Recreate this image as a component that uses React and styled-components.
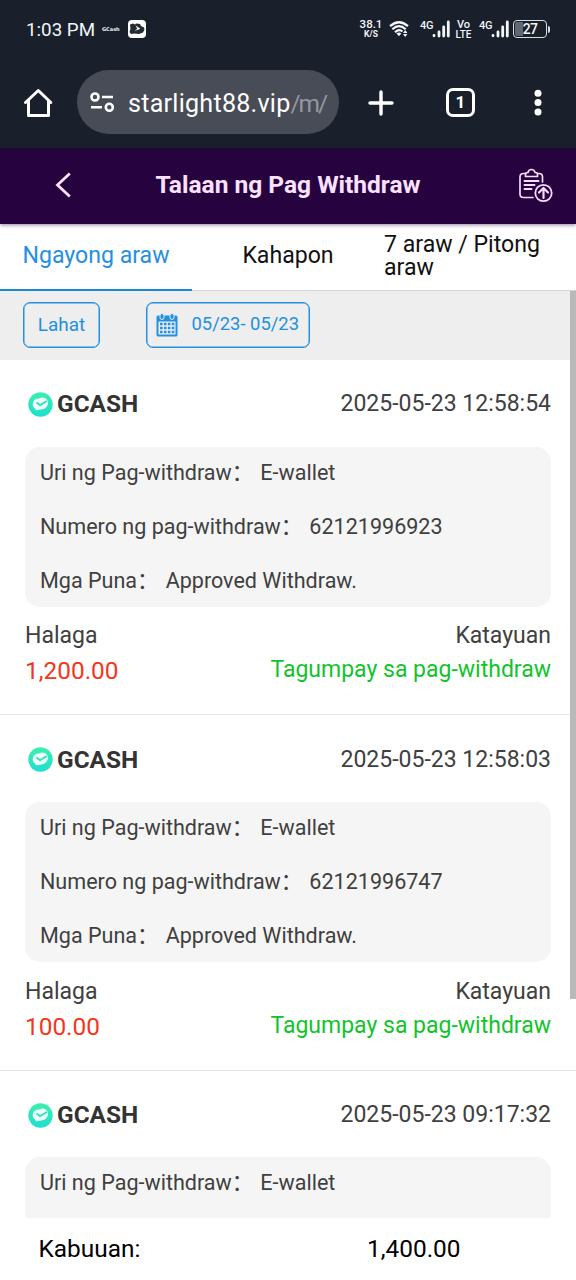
import React from "react";
import styled, { createGlobalStyle } from "styled-components";

const GlobalStyle = createGlobalStyle`
  * { box-sizing: border-box; }
  html, body { margin: 0; padding: 0; background: #fff; }
  body { font-family: Roboto, "Noto Sans CJK SC", sans-serif; overflow: hidden; }
`;

const Screen = styled.div`
  width: 576px;
  height: 1280px;
  display: flex;
  flex-direction: column;
  overflow: hidden;
  background: #fff;
  color: #404040;
`;

const StatusBar = styled.div`
  height: 58px;
  flex: none;
  display: flex;
  align-items: center;
  padding: 0 26px 0 26px;
  background: #19202b;
  color: #f1f5f9;
`;

const Clock = styled.span`
  font-size: 18.8px;
  line-height: 24px;
  padding-top: 2px;
  width: 76px;
  white-space: nowrap;
`;

const CarrierMark = styled.span`
  font-family: "DejaVu Sans", sans-serif;
  font-size: 5px;
  font-weight: 700;
  width: 26px;
  line-height: 8px;
  white-space: nowrap;
`;

const StatusIcons = styled.div`
  display: flex;
  align-items: center;
  margin-left: auto;
`;

const StackedLabel = styled.div`
  width: ${(p) => p.$width}px;
  margin-right: ${(p) => p.$gap}px;
  display: flex;
  flex-direction: column;
  align-items: center;
  font-weight: 500;
  font-size: ${(p) => p.$size}px;
  line-height: ${(p) => p.$line}px;
  white-space: nowrap;

  small {
    font-size: ${(p) => p.$sub}px;
    font-weight: ${(p) => p.$subWeight || 700};
    line-height: 9px;
  }
`;

const WifiSlot = styled.div`
  display: flex;
  margin-right: 11px;
`;

const SignalGroup = styled.div`
  display: flex;
  height: 19px;
  width: 30px;
  justify-content: space-between;
  margin-right: ${(p) => p.$gap}px;
  font-size: 11px;
  font-weight: 500;
  letter-spacing: -0.2px;
  line-height: 12px;
  svg { margin-left: -2px; flex: none; }
`;

const BrowserBar = styled.div`
  height: 91px;
  flex: none;
  display: flex;
  align-items: flex-start;
  padding: 12px 0 0 23px;
  background: #19202b;
  color: #fff;
  border-bottom: 1px solid #1b0c33;
`;

const BarIcon = styled.div`
  height: 64px;
  width: ${(p) => p.$width}px;
  flex: none;
  display: flex;
  align-items: center;
  padding-top: 1px;
  justify-content: ${(p) => p.$align || "center"};
`;

const AddressPill = styled.div`
  width: 262px;
  height: 64px;
  flex: none;
  display: flex;
  align-items: center;
  border-radius: 32px;
  background: #484c56;
  padding-left: 12px;
  svg { margin-right: 14px; flex: none; }
`;

const Url = styled.span`
  font-size: 25.1px;
  letter-spacing: 0.25px;
  line-height: 32px;
  padding-top: 3px;
  white-space: nowrap;
  span { color: #94979f; font-size: 24.5px; letter-spacing: -2.1px; }
`;

const TabCounter = styled.div`
  width: 29px;
  height: 29px;
  border: 3px solid #fff;
  border-radius: 7px;
  font-size: 17px;
  font-weight: 700;
  line-height: 23px;
  text-align: center;
`;

const TitleBar = styled.header`
  height: 75px;
  flex: none;
  display: grid;
  grid-template-columns: 76px 1fr 76px;
  align-items: center;
  background: #26033f;
  color: #fce2ff;
  box-shadow: 0 1px 4px rgba(38, 3, 63, 0.5);
  z-index: 1;
`;

const BackButton = styled.div`
  display: flex;
  justify-content: flex-end;
  padding-right: 4px;
  padding-bottom: 4px;
`;

const HistoryButton = styled.div`
  display: flex;
  padding: 0 0 1px 17px;
`;

const Title = styled.h1`
  margin: 0;
  padding-bottom: 3px;
  font-size: 24.5px;
  font-weight: 700;
  line-height: 30px;
  text-align: center;
  white-space: nowrap;
`;

const Tabs = styled.nav`
  height: 67px;
  flex: none;
  display: grid;
  grid-template-columns: repeat(3, 192px);
`;

const Tab = styled.div`
  display: flex;
  align-items: center;
  justify-content: ${(p) => (p.$wide ? "flex-start" : "center")};
  padding-bottom: ${(p) => (p.$wide ? 2 : 3)}px;
  font-size: 23.1px;
  line-height: 23px;
  color: ${(p) => (p.$active ? "#2490df" : "#111")};
  border-bottom: ${(p) => (p.$active ? "2px solid #1e88d8" : "1px solid #d4d4d4")};
`;

const Body = styled.main`
  position: relative;
  flex: 1;
  min-height: 0;
  display: flex;
  flex-direction: column;
`;

const Filters = styled.div`
  height: 69px;
  flex: none;
  display: flex;
  align-items: flex-start;
  gap: 45.5px;
  padding: 10.5px 23px;
  background: #eee;
`;

const FilterButton = styled.div`
  width: ${(p) => p.$width}px;
  height: 46.5px;
  display: flex;
  align-items: center;
  justify-content: center;
  gap: 13px;
  border: 1.5px solid #2490df;
  box-shadow: inset 0 0 0 0.5px #2490df;
  border-radius: 7px;
  color: #2490df;
  font-size: ${(p) => p.$size}px;
  line-height: 24px;
  padding-top: ${(p) => p.$drop || 0}px;
  white-space: nowrap;
  span { padding-bottom: 1px; }
`;

const Records = styled.section`
  flex: 1;
  min-height: 0;
  overflow: hidden;
`;

const Record = styled.article`
  height: 355.4px;
  padding: 0 25px;
  border-bottom: 1px solid #e8e8e8;
`;

const RecordHead = styled.div`
  height: 86.6px;
  display: flex;
  align-items: center;
  justify-content: space-between;
  padding-left: 3px;
  font-size: 23px;
  line-height: 28px;
  white-space: nowrap;
`;

const Timestamp = styled.span`
  padding-top: 2px;
`;

const Wallet = styled.div`
  display: flex;
  align-items: center;
  gap: 4px;
  padding-top: 2px;
  font-size: 24.4px;
  font-weight: 700;
  color: #333;
`;

const Details = styled.div`
  height: 160.4px;
  padding: 0 15px;
  border-radius: 15px;
  background: #f5f5f5;
`;

const Detail = styled.div`
  height: 54px;
  display: flex;
  align-items: flex-start;
  padding-top: 13px;
  font-size: 21.55px;
  line-height: 26px;
  white-space: nowrap;

  span { height: 26px; }
  span + span { margin-left: 7px; }
`;

const Summary = styled.div`
  display: flex;
  justify-content: space-between;
  padding-top: 12.3px;
`;

const Figure = styled.div`
  display: flex;
  flex-direction: column;
  text-align: ${(p) => p.$align || "left"};
  font-size: 23px;
  line-height: 33px;
  white-space: nowrap;
`;

const Amount = styled.span`
  font-size: 24.4px;
  line-height: 38px;
  color: #f43621;
`;

const Status = styled.span`
  font-size: 23px;
  line-height: 35px;
  color: #12c42b;
`;

const Scrollbar = styled.div`
  position: absolute;
  top: 0;
  right: 0;
  width: 6.5px;
  height: 708px;
  background: #b9b9b9;
`;

const Total = styled.footer`
  height: 62px;
  flex: none;
  display: grid;
  grid-template-columns: 367px 1fr;
  align-items: center;
  padding-bottom: 1px;
  color: #000;
  font-size: 24.4px;
  span:first-child { padding-left: 38.5px; }
`;

function Bars() {
  return (
    <svg width="18" height="18" viewBox="0 0 18 18" stroke="#f4f6f9" strokeWidth="2.8" strokeLinecap="round">
      <path d="M2 15.500v.3M7 12v4M11.700 7v9M16.300 2v14" />
    </svg>
  );
}

function Signal({ gap }) {
  return (
    <SignalGroup $gap={gap}>
      <span>4G</span>
      <Bars />
    </SignalGroup>
  );
}

function AppBadge() {
  return (
    <svg width="18" height="18" viewBox="0 0 18 18">
      <rect width="18" height="18" rx="4" fill="#fff" />
      <path d="M2 4.500l3-1 2 1 1.500-1 3.500.5 1 2 3 1.500.5 2-1.500 3-4 1.500-5-.5-3 .5L1.500 12l1-3z" fill="#222a35" />
      <path d="M7.500 5.500l5 3.300-6 2.200 2.800-2.200z" fill="#fff" />
    </svg>
  );
}

function Wifi() {
  return (
    <svg width="20" height="18" viewBox="0 0 20 18" fill="none" stroke="#f4f6f9" strokeWidth="2.200">
      <path d="M1 6.200Q10-1.700 19 6.200M3.300 9.200Q10 3.200 16.700 9.200M6 12.200Q10 8.400 13.500 11.500" />
      <path d="M7.500 13.500Q10 11.500 12.300 13.500L10 16.200z" fill="#f4f6f9" stroke="none" />
      <path d="M14 13l2.200-3 2.200 3zM14 14h4.400l-2.200 3z" fill="#f4f6f9" stroke="none" />
    </svg>
  );
}

const BatteryShell = styled.div`
  width: 34px;
  height: 18px;
  border: 1.5px solid #d8dde6;
  border-radius: 4px;
  background: linear-gradient(90deg, #626873 8px, transparent 8px);
  background-origin: content-box;
  background-clip: content-box;
  background-repeat: no-repeat;
  padding: 1px;
  display: flex;
  align-items: center;
  justify-content: center;
  font-size: 14px;
  font-weight: 500;
  letter-spacing: -0.8px;
  line-height: 14px;
`;

const BatteryTip = styled.div`
  width: 2px;
  height: 7px;
  margin-left: 1px;
  border-radius: 0 2px 2px 0;
  background: #d8dde6;
`;

function HomeIcon() {
  return (
    <svg width="30" height="30" viewBox="0 0 30 30" fill="none" stroke="#fff" strokeWidth="3" strokeLinejoin="round" strokeLinecap="round">
      <path d="M2.500 14.500L15.300 2.500l12.500 12M5.500 12.500v15h20v-15" />
    </svg>
  );
}

function TuneIcon() {
  return (
    <svg width="25" height="20" viewBox="0 0 25 20" fill="none" stroke="#fff" strokeWidth="2.600">
      <circle cx="6" cy="5" r="3.500" />
      <circle cx="20.300" cy="15.300" r="3.500" />
      <path d="M13 5h11M2 15.300h11" />
    </svg>
  );
}

function PlusIcon() {
  return (
    <svg width="26" height="26" viewBox="0 0 26 26" stroke="#fff" strokeWidth="3.400" strokeLinecap="round">
      <path d="M13 2v22M2 13h22" />
    </svg>
  );
}

function MenuIcon() {
  return (
    <svg width="8" height="28" viewBox="0 0 8 28" fill="#fff">
      <circle cx="4" cy="4.300" r="3.500" />
      <circle cx="4" cy="13.500" r="3.500" />
      <circle cx="4" cy="23" r="3.500" />
    </svg>
  );
}

function BackIcon() {
  return (
    <svg width="18" height="26" viewBox="0 0 18 26" fill="none" stroke="#fce2ff" strokeWidth="2.800">
      <path d="M15.800 1.500L3.500 13l12.300 11.500" />
    </svg>
  );
}

function ClipboardUp() {
  return (
    <svg width="37" height="36" viewBox="0 0 37 36" fill="none" stroke="#f5dcfa" strokeWidth="1.700" strokeLinejoin="round" strokeLinecap="round">
      <path d="M8.500 5.500H6.500Q3 5.500 3 9V26Q3 29.500 6.500 29.500H16M20.500 5.500H22Q25.500 5.500 25.500 9V14" />
      <path d="M8.500 8.500V6Q8.500 4.500 11 4.500Q11.500 1.500 14.500 1.500T18 4.500Q20.500 4.500 20.500 6V8.500z" />
      <path d="M7.500 13h14M7.500 17h10M7.500 21h7" strokeWidth="2" />
      <circle cx="26.500" cy="25" r="8.200" strokeWidth="1.800" />
      <path d="M26.500 30v-9M22 24.500l4.500-4.500 4.500 4.500" strokeWidth="2.200" />
    </svg>
  );
}

function CalendarIcon() {
  return (
    <svg width="22" height="24" viewBox="0 0 22 24">
      <path d="M2 2.500h18q1.500 0 1.500 1.500v18q0 1.500-1.500 1.500h-18Q.5 23.500.5 22V4Q.5 2.500 2 2.500z" fill="#2490df" />
      <path d="M2.500 8.500h17v13h-17z" fill="#eee" />
      <g fill="#2490df" stroke="#eee" strokeWidth="1">
        <rect x="4" y=".5" width="4" height="6" rx="2" />
        <rect x="14" y=".5" width="4" height="6" rx="2" />
      </g>
      <path d="M4 11h14.500M4 15h14.500M4 19h14.500" stroke="#2490df" strokeWidth="2.600" strokeDasharray="2.600 1.300" />
    </svg>
  );
}

function WalletLogo() {
  return (
    <svg width="25" height="25" viewBox="0 0 25 25">
      <defs>
        <linearGradient id="mint" x1="0" y1="0" x2="0" y2="1">
          <stop offset="0" stopColor="#3af0ad" />
          <stop offset="1" stopColor="#1fdfd0" />
        </linearGradient>
      </defs>
      <circle cx="12.500" cy="12.500" r="12.200" fill="url(#mint)" />
      <path d="M5 10.500Q6 6.500 11 6.500Q14 4.800 17 6Q20.500 8 20 12Q18.500 17 13 17.500Q10 18.500 8 18.300L7 16.500Q4 14.500 5 10.500z" fill="#f0fffb" />
      <path d="M8.500 10.500l3.500 2.500 7-4" fill="none" stroke="#2be2c4" strokeWidth="1.900" />
    </svg>
  );
}

const records = [
  { time: "2025-05-23 12:58:54", number: "62121996923", amount: "1,200.00" },
  { time: "2025-05-23 12:58:03", number: "62121996747", amount: "100.00" },
  { time: "2025-05-23 09:17:32", number: "", amount: "" },
];

function WithdrawRecord({ time, number, amount }) {
  return (
    <Record>
      <RecordHead>
        <Wallet>
          <WalletLogo />
          <span>GCASH</span>
        </Wallet>
        <Timestamp>{time}</Timestamp>
      </RecordHead>
      <Details>
        <Detail>
          <span>Uri ng Pag-withdraw：</span>
          <span>E-wallet</span>
        </Detail>
        {number && (
          <>
            <Detail>
              <span>Numero ng pag-withdraw：</span>
              <span>{number}</span>
            </Detail>
            <Detail>
              <span>Mga Puna：</span>
              <span>Approved Withdraw.</span>
            </Detail>
          </>
        )}
      </Details>
      {amount && (
        <Summary>
          <Figure>
            <span>Halaga</span>
            <Amount>{amount}</Amount>
          </Figure>
          <Figure $align="right">
            <span>Katayuan</span>
            <Status>Tagumpay sa pag-withdraw</Status>
          </Figure>
        </Summary>
      )}
    </Record>
  );
}

export default function App() {
  return (
    <Screen>
      <GlobalStyle />
      <StatusBar>
        <Clock>1:03 PM</Clock>
        <CarrierMark>GCash</CarrierMark>
        <AppBadge />
        <StatusIcons>
          <StackedLabel $width={22} $gap={7} $size={11.5} $line={11} $sub={8.5}>
            38.1<small>K/S</small>
          </StackedLabel>
          <WifiSlot><Wifi /></WifiSlot>
          <Signal gap={5} />
          <StackedLabel $width={17} $gap={7} $size={11} $line={10} $sub={10} $subWeight={500}>
            Vo<small>LTE</small>
          </StackedLabel>
          <Signal gap={4} />
          <BatteryShell>27</BatteryShell>
          <BatteryTip />
        </StatusIcons>
      </StatusBar>
      <BrowserBar>
        <BarIcon $width={54} $align="flex-start"><HomeIcon /></BarIcon>
        <AddressPill>
          <TuneIcon />
          <Url>starlight88.vip<span>/m/</span></Url>
        </AddressPill>
        <BarIcon $width={83}><PlusIcon /></BarIcon>
        <BarIcon $width={77}><TabCounter>1</TabCounter></BarIcon>
        <BarIcon $width={77}><MenuIcon /></BarIcon>
      </BrowserBar>
      <TitleBar>
        <BackButton><BackIcon /></BackButton>
        <Title>Talaan ng Pag Withdraw</Title>
        <HistoryButton><ClipboardUp /></HistoryButton>
      </TitleBar>
      <Tabs>
        <Tab $active>Ngayong araw</Tab>
        <Tab>Kahapon</Tab>
        <Tab $wide>7 araw / Pitong<br />araw</Tab>
      </Tabs>
      <Body>
        <Filters>
          <FilterButton $width={77} $size={18.9} $drop={1}>Lahat</FilterButton>
          <FilterButton $width={164.5} $size={18.4}>
            <CalendarIcon />
            <span>05/23- 05/23</span>
          </FilterButton>
        </Filters>
        <Records>
          {records.map((r) => (
            <WithdrawRecord key={r.time} {...r} />
          ))}
        </Records>
        <Scrollbar />
      </Body>
      <Total>
        <span>Kabuuan:</span>
        <span>1,400.00</span>
      </Total>
    </Screen>
  );
}
